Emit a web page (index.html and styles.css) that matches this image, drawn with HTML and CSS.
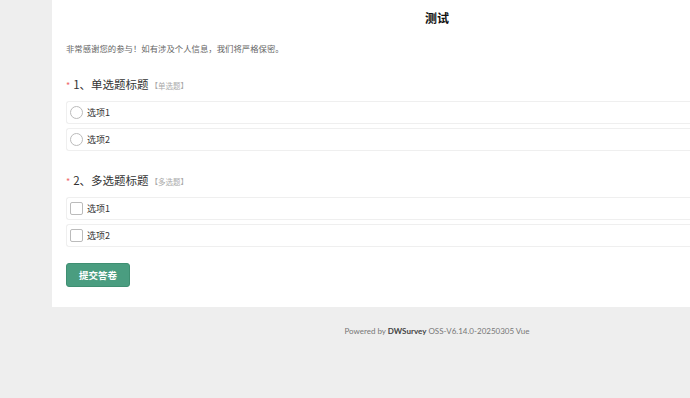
FILE: index.html
```html
<!DOCTYPE html>
<html lang="zh-CN">

<head>
    <meta charset="UTF-8">
    <meta name="viewport" content="width=device-width, initial-scale=1.0">
    <title>测试</title>
    <link rel="stylesheet" href="styles.css">
</head>

<body>
    <div class="page">
        <div class="survey">
            <div class="survey-title">测试</div>
            <div class="survey-desc">非常感谢您的参与！如有涉及个人信息，我们将严格保密。</div>

            <div class="question">
                <div class="q-title"><span class="star">*</span>1、单选题标题<span class="q-type">【单选题】</span></div>
                <div class="option"><span class="radio"></span>选项1</div>
                <div class="option"><span class="radio"></span>选项2</div>
            </div>

            <div class="question">
                <div class="q-title"><span class="star">*</span>2、多选题标题<span class="q-type">【多选题】</span></div>
                <div class="option"><span class="check"></span>选项1</div>
                <div class="option"><span class="check"></span>选项2</div>
            </div>

            <button class="submit">提交答卷</button>
        </div>
        <div class="footer">Powered by <b>DWSurvey</b> OSS-V6.14.0-20250305 Vue</div>
    </div>
</body>

</html>
```

FILE: styles.css
```css
html, body {
    margin: 0;
    padding: 0;
    background: #eeeeee;
    overflow: hidden;
    font-family: "Noto Sans CJK SC", "Noto Sans", sans-serif;
    color: #333;
}

.page {
    width: 770px;
    margin-left: 52px;
}

.survey {
    background: #fff;
    padding: 9px 14px 20px 14px;
}

.survey-title {
    text-align: center;
    font-size: 12px;
    font-weight: bold;
    color: #111;
    line-height: 18px;
}

.survey-desc {
    margin-top: 14px;
    font-size: 8.4px;
    color: #666;
    line-height: 14px;
}

.question {
    margin-top: 20px;
}

.question + .question {
    margin-top: 20px;
}

.q-title {
    font-size: 11.5px;
    line-height: 18px;
    margin-bottom: 6px;
}

.star {
    color: #f06a6a;
    font-size: 9px;
    margin: 0 3px 0 0;
}

.q-type {
    font-size: 7.5px;
    color: #aaa;
    margin-left: 2px;
}

.option {
    display: flex;
    align-items: center;
    height: 21px;
    border: 1px solid #efefef;
    border-right: none;
    border-radius: 3px 0 0 3px;
    margin-bottom: 4px;
    padding-left: 3px;
    font-size: 9px;
    color: #333;
}

.radio {
    width: 11px;
    height: 11px;
    border: 1px solid #bbb;
    border-radius: 50%;
    margin-right: 4px;
}

.check {
    width: 11px;
    height: 11px;
    border: 1px solid #bbb;
    border-radius: 2px;
    margin-right: 4px;
}

.submit {
    margin-top: 12px;
    width: 64px;
    height: 24px;
    border: 1px solid #3f8f72;
    border-radius: 3px;
    background: #4a9d80;
    color: #fff;
    font-family: "Noto Sans CJK SC", sans-serif;
    font-size: 9.5px;
    font-weight: bold;
    padding: 0;
}

.footer {
    text-align: center;
    font-size: 8px;
    color: #777;
    padding-top: 19px;
    font-family: "Lato", "Noto Sans", sans-serif;
}

.footer b {
    color: #444;
}
```
